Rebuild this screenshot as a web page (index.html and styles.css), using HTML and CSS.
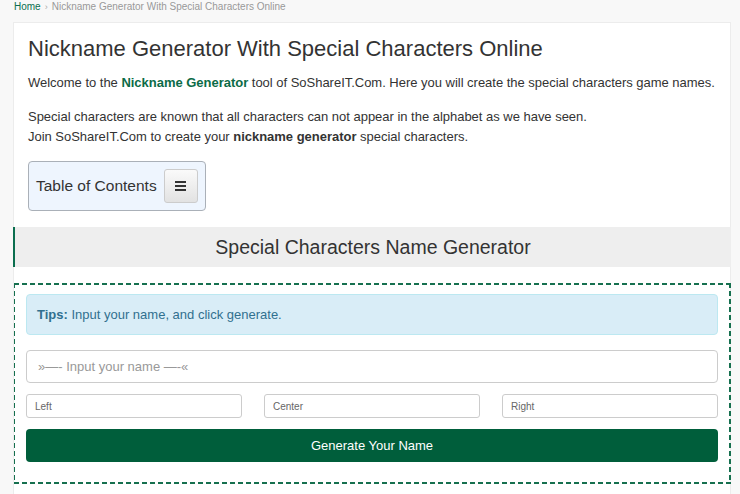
FILE: index.html
```html
<!DOCTYPE html>
<html lang="en">
<head>
<meta charset="utf-8">
<title>Nickname Generator With Special Characters Online</title>
<link rel="stylesheet" href="styles.css">
</head>
<body>
<nav class="crumbs"><a class="crumb-home" href="#">Home</a><span class="crumb-sep">›</span><span class="crumb-current">Nickname Generator With Special Characters Online</span></nav>
<main class="card">
  <h1 class="title">Nickname Generator With Special Characters Online</h1>
  <p class="text">Welcome to the <strong class="green">Nickname Generator</strong> tool of SoShareIT.Com. Here you will create the special characters game names.</p>
  <p class="text">Special characters are known that all characters can not appear in the alphabet as we have seen.<br>Join SoShareIT.Com to create your <strong>nickname generator</strong> special characters.</p>
  <div class="toc">
    <span class="toc-label">Table of Contents</span>
    <button class="toc-btn" type="button" aria-label="Toggle"><span class="bars"><i></i><i></i><i></i></span></button>
  </div>
  <h2 class="section">Special Characters Name Generator</h2>
  <section class="gen">
    <div class="tips"><strong>Tips:</strong> Input your name, and click generate.</div>
    <input class="name-input" type="text" placeholder="»—- Input your name —-«">
    <div class="row">
      <input class="small-input" type="text" placeholder="Left">
      <input class="small-input" type="text" placeholder="Center">
      <input class="small-input" type="text" placeholder="Right">
    </div>
    <button class="gen-btn" type="button">Generate Your Name</button>
  </section>
</main>
</body>
</html>
```
FILE: styles.css
```css
html, body {
  margin: 0;
  padding: 0;
}
body {
  background: #f8f8f8;
  font-family: "Liberation Sans", Arial, sans-serif;
  color: #333;
  height: 494px;
  overflow: hidden;
}
.crumbs {
  height: 22px;
  padding-left: 14px;
  font-size: 10px;
  line-height: 13px;
  color: #999;
  box-sizing: border-box;
}
.crumb-home {
  color: #0b6e4f;
  text-decoration: none;
}
.crumb-sep {
  margin: 0 4px;
  color: #aaa;
  font-size: 9px;
}
.card {
  display: block;
  margin-left: 13px;
  width: 718px;
  box-sizing: border-box;
  background: #fff;
  border: 1px solid #ececec;
  padding: 14px 12px 20px 14px;
}
.title {
  margin: 0 0 12px;
  font-size: 22px;
  line-height: 24px;
  font-weight: normal;
  color: #333;
}
.text {
  margin: 0 0 14px;
  font-size: 13px;
  line-height: 20px;
  letter-spacing: -0.02px;
}
.green {
  color: #0b6b47;
}
.toc {
  display: inline-flex;
  align-items: center;
  gap: 7px;
  padding: 7px;
  background: #eef5fe;
  border: 1px solid #aab0b8;
  border-radius: 4px;
}
.toc-label {
  font-size: 15.5px;
  color: #333;
}
.toc-btn {
  width: 34px;
  height: 34px;
  padding: 0;
  border: 1px solid #ccc;
  border-radius: 3px;
  background: linear-gradient(#fafafa, #e2e2e2);
  display: flex;
  align-items: center;
  justify-content: center;
}
.bars {
  display: flex;
  flex-direction: column;
  gap: 2px;
}
.bars i {
  display: block;
  width: 11px;
  height: 2px;
  background: #333;
}
.section {
  margin: 16px -13px 16px -15px;
  height: 40px;
  line-height: 40px;
  background: #eeeeee;
  border-left: 2px solid #0b6e4f;
  text-align: center;
  font-size: 19.5px;
  font-weight: normal;
  color: #333;
}
.gen {
  margin: 0 -13px 0 -14px;
  padding: 11px 13px 22px 12px;
  display: flex;
  flex-direction: column;
  background:
    repeating-linear-gradient(90deg, #16704f 0 5px, transparent 5px 8px) top left / 100% 2px no-repeat,
    repeating-linear-gradient(90deg, #16704f 0 5px, transparent 5px 8px) bottom left / 100% 2px no-repeat,
    repeating-linear-gradient(180deg, #16704f 0 5px, transparent 5px 8px) top left / 1px 100% no-repeat,
    repeating-linear-gradient(180deg, #16704f 0 5px, transparent 5px 8px) top right / 2px 100% no-repeat;
}
.tips {
  background: #d9edf7;
  border: 1px solid #bce8f1;
  border-radius: 4px;
  color: #31708f;
  font-size: 13px;
  line-height: 20px;
  padding: 10px 10px 9px;
}
.name-input {
  margin-top: 15px;
  height: 33px;
  box-sizing: border-box;
  border: 1px solid #ccc;
  border-radius: 4px;
  padding: 0 11px;
  font-family: inherit;
  font-size: 13px;
  color: #555;
}
.name-input::placeholder {
  color: #999;
}
.row {
  margin-top: 11px;
  display: grid;
  grid-template-columns: repeat(3, 1fr);
  gap: 22px;
}
.small-input {
  height: 24px;
  min-width: 0;
  box-sizing: border-box;
  border: 1px solid #ccc;
  border-radius: 3px;
  padding: 0 8px;
  font-family: inherit;
  font-size: 10px;
}
.small-input::placeholder {
  color: #666;
}
.gen-btn {
  margin-top: 11px;
  height: 33px;
  border: none;
  border-radius: 4px;
  background: #005e3b;
  color: #fff;
  font-family: inherit;
  font-size: 13px;
}
```
